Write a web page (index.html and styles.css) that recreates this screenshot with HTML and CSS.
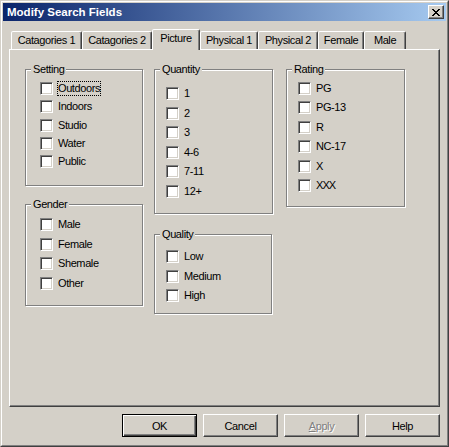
FILE: index.html
```html
<!DOCTYPE html>
<html>
<head>
<meta charset="utf-8">
<link rel="stylesheet" href="styles.css">
</head>
<body>
<div class="window">
  <div class="frame">
    <div class="titlebar">
      <span class="title">Modify Search Fields</span>
      <div class="close">
        <svg width="8" height="7" viewBox="0 0 8 7" shape-rendering="crispEdges">
          <rect x="0" y="0" width="2" height="1"/><rect x="6" y="0" width="2" height="1"/>
          <rect x="1" y="1" width="2" height="1"/><rect x="5" y="1" width="2" height="1"/>
          <rect x="2" y="2" width="4" height="1"/>
          <rect x="3" y="3" width="2" height="1"/>
          <rect x="2" y="4" width="4" height="1"/>
          <rect x="1" y="5" width="2" height="1"/><rect x="5" y="5" width="2" height="1"/>
          <rect x="0" y="6" width="2" height="1"/><rect x="6" y="6" width="2" height="1"/>
        </svg>
      </div>
    </div>

    <div class="tabs">
      <div class="tab w71">Catagories 1</div>
      <div class="tab w70">Catagories 2</div>
      <div class="tab selected w48">Picture</div>
      <div class="tab w58">Physical 1</div>
      <div class="tab w60">Physical 2</div>
      <div class="tab w46">Female</div>
      <div class="tab w42">Male</div>
    </div>

    <div class="panel">
      <div class="columns">
        <div class="col">
          <div class="group g-setting">
            <div class="legend">Setting</div>
            <div class="list list-wide mt6 r18">
              <div class="row"><span class="cb"></span><span class="focus">Outdoors</span></div>
              <div class="row"><span class="cb"></span><span>Indoors</span></div>
              <div class="row"><span class="cb"></span><span>Studio</span></div>
              <div class="row"><span class="cb"></span><span>Water</span></div>
              <div class="row"><span class="cb"></span><span>Public</span></div>
            </div>
          </div>
          <div class="group g-gender">
            <div class="legend">Gender</div>
            <div class="list list-wide mt7 r195">
              <div class="row"><span class="cb"></span><span>Male</span></div>
              <div class="row"><span class="cb"></span><span>Female</span></div>
              <div class="row"><span class="cb"></span><span>Shemale</span></div>
              <div class="row"><span class="cb"></span><span>Other</span></div>
            </div>
          </div>
        </div>

        <div class="col">
          <div class="group g-quantity">
            <div class="legend">Quantity</div>
            <div class="list list-narrow mt11 r195">
              <div class="row"><span class="cb"></span><span>1</span></div>
              <div class="row"><span class="cb"></span><span>2</span></div>
              <div class="row"><span class="cb"></span><span>3</span></div>
              <div class="row"><span class="cb"></span><span>4-6</span></div>
              <div class="row"><span class="cb"></span><span>7-11</span></div>
              <div class="row"><span class="cb"></span><span>12+</span></div>
            </div>
          </div>
          <div class="group g-quality">
            <div class="legend">Quality</div>
            <div class="list list-narrow mt9 r195">
              <div class="row"><span class="cb"></span><span>Low</span></div>
              <div class="row"><span class="cb"></span><span>Medium</span></div>
              <div class="row"><span class="cb"></span><span>High</span></div>
            </div>
          </div>
        </div>

        <div class="col">
          <div class="group g-rating">
            <div class="legend">Rating</div>
            <div class="list list-narrow mt6 r194">
              <div class="row"><span class="cb"></span><span>PG</span></div>
              <div class="row"><span class="cb"></span><span>PG-13</span></div>
              <div class="row"><span class="cb"></span><span>R</span></div>
              <div class="row"><span class="cb"></span><span>NC-17</span></div>
              <div class="row"><span class="cb"></span><span>X</span></div>
              <div class="row"><span class="cb"></span><span class="xxx">XXX</span></div>
            </div>
          </div>
        </div>
      </div>
    </div>

    <div class="buttons">
      <div class="btn default">OK</div>
      <div class="btn">Cancel</div>
      <div class="btn disabled"><span><u>A</u>pply</span></div>
      <div class="btn">Help</div>
    </div>
  </div>
</div>
</body>
</html>
```

FILE: styles.css
```css
* { box-sizing: border-box; }

html, body {
  margin: 0;
  padding: 0;
  background: #d4d0c8;
}

body {
  font-family: "Liberation Sans", Arial, sans-serif;
  font-size: 11px;
  letter-spacing: -0.4px;
  color: #000;
}

.window {
  width: 449px;
  height: 447px;
  border: 1px solid;
  border-color: #d4d0c8 #404040 #404040 #d4d0c8;
  background: #d4d0c8;
}

.frame {
  height: 100%;
  border: 1px solid;
  border-color: #fff #808080 #808080 #fff;
  padding: 1px;
  display: flex;
  flex-direction: column;
}

/* Title bar */
.titlebar {
  flex: none;
  height: 18px;
  display: flex;
  align-items: center;
  padding: 0 2px;
  background: linear-gradient(to right, #0a246a, #a6caf0);
}

.title {
  flex: 1;
  color: #fff;
  font-weight: bold;
  font-size: 11.5px;
  letter-spacing: 0;
  padding-left: 2px;
}

.close {
  width: 16px;
  height: 14px;
  display: flex;
  align-items: center;
  justify-content: center;
  background: #d4d0c8;
  border: 1px solid;
  border-color: #fff #404040 #404040 #fff;
  box-shadow: inset -1px -1px 0 #808080;
}

.close svg { fill: #000; display: block; }

/* Tabs */
.tabs {
  flex: none;
  height: 28px;
  display: flex;
  align-items: flex-end;
  padding-left: 8px;
}

.tab {
  height: 18px;
  border: 1px solid;
  border-bottom: none;
  border-color: #fff #404040 transparent #fff;
  border-radius: 2px 2px 0 0;
  box-shadow: inset -1px 0 0 #808080;
  text-align: center;
  line-height: 16px;
  white-space: nowrap;
  background: #d4d0c8;
}

.tab.selected {
  height: 21px;
  margin-bottom: -1px;
  position: relative;
  z-index: 1;
  line-height: 16px;
  padding-top: 0;
}

.w71 { width: 71px; }
.w70 { width: 70px; }
.w48 { width: 48px; }
.w58 { width: 58px; }
.w60 { width: 60px; }
.w46 { width: 46px; }
.w42 { width: 42px; }

/* Panel */
.panel {
  flex: none;
  height: 358px;
  margin: 0 6px;
  border: 1px solid;
  border-color: #fff #404040 #404040 #fff;
  box-shadow: inset -1px -1px 0 #808080;
  padding: 19px 0 0 15px;
}

.columns {
  display: grid;
  grid-template-columns: 129px 132px 121px;
  align-items: start;
}

.col {
  display: flex;
  flex-direction: column;
}

.group {
  display: flex;
  flex-direction: column;
  border: 1px solid #808080;
  box-shadow: 1px 1px 0 #fff, inset 1px 1px 0 #fff;
}

.g-setting  { width: 118px; height: 117px; }
.g-gender   { width: 118px; height: 102px; margin-top: 18px; }
.g-quantity { width: 119px; height: 145px; }
.g-quality  { width: 118px; height: 80px;  margin-top: 20px; }
.g-rating   { width: 119px; height: 138px; }

.legend {
  align-self: flex-start;
  height: 13px;
  line-height: 13px;
  margin: -7px 0 0 5px;
  padding: 0 2px;
  background: #d4d0c8;
}

.list {
  display: flex;
  flex-direction: column;
}

.list-wide { padding-left: 14px; }
.list-narrow { padding-left: 11px; }

.mt6 { margin-top: 6px; }
.mt7 { margin-top: 7px; }
.mt9 { margin-top: 9px; }
.mt11 { margin-top: 11px; }

.row {
  display: flex;
  align-items: flex-start;
  gap: 5px;
  line-height: 13px;
  white-space: nowrap;
}

.r18 .row { height: 18.25px; }
.r195 .row { height: 19.5px; }
.r194 .row { height: 19.4px; }

.cb {
  flex: none;
  width: 13px;
  height: 13px;
  background: #fff;
  border: 1px solid;
  border-color: #808080 #fff #fff #808080;
  box-shadow: inset 1px 1px 0 #404040, inset -1px -1px 0 #d4d0c8;
}

.focus {
  outline: 1px dotted #000;
  outline-offset: 0;
}

.xxx { letter-spacing: -0.9px; }

/* Buttons */
.buttons {
  flex: none;
  display: flex;
  justify-content: flex-end;
  gap: 6px;
  margin: 7px 6px 0 0;
}

.btn {
  width: 75px;
  height: 23px;
  display: flex;
  align-items: center;
  justify-content: center;
  border: 1px solid;
  border-color: #fff #404040 #404040 #fff;
  box-shadow: inset -1px -1px 0 #808080;
  background: #d4d0c8;
}

.btn.default {
  border-color: #000;
  box-shadow: inset 1px 1px 0 #fff, inset -1px -1px 0 #404040, inset -2px -2px 0 #808080;
}

.btn.disabled {
  color: #808080;
  text-shadow: 1px 1px 0 #fff;
}
```
